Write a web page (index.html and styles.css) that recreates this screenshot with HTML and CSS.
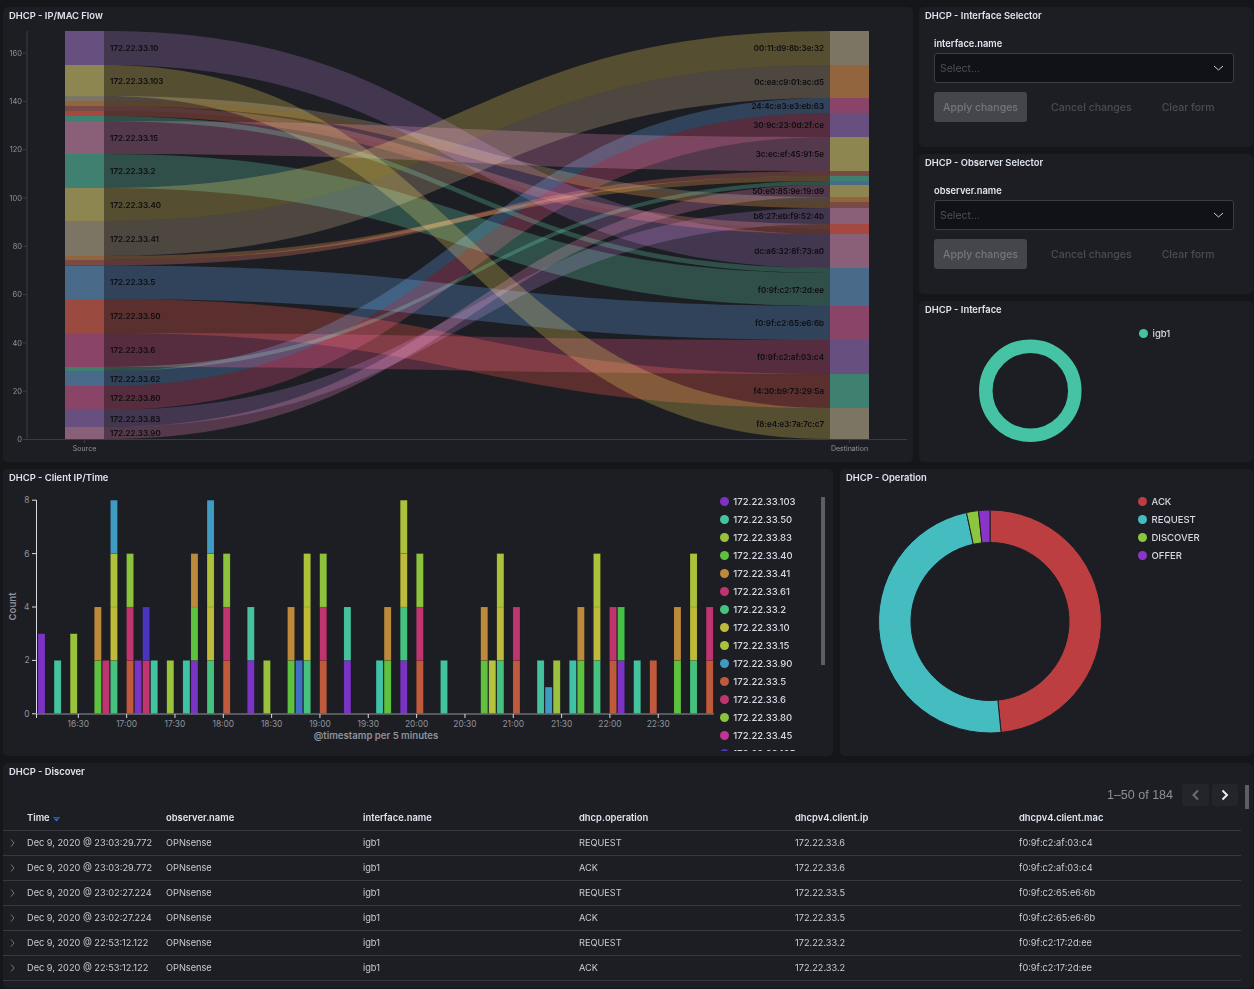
FILE: index.html
```html
<!DOCTYPE html>
<html lang="en">
<head>
    <meta charset="UTF-8">
    <title>DHCP</title>
    <link rel="stylesheet" href="styles.css">
</head>
<body>
<div class="row row-top">
    <div class="panel flow">
        <h2>DHCP - IP/MAC Flow</h2>
        <svg id="sankey" class="chart" width="910" height="440" viewBox="3 22 910 440"></svg>
    </div>
    <div class="side">
        <div class="panel selector">
            <h2>DHCP - Interface Selector</h2>
            <div class="form">
                <label>interface.name</label>
                <div class="select">
                    <span>Select...</span>
                    <svg width="11" height="6" viewBox="0 0 11 6"><polyline points="1,1 5.5,5 10,1"/></svg>
                </div>
                <div class="btns">
                    <button class="apply" disabled>Apply changes</button>
                    <button class="plain" disabled>Cancel changes</button>
                    <button class="plain" disabled>Clear form</button>
                </div>
            </div>
        </div>
        <div class="panel selector">
            <h2>DHCP - Observer Selector</h2>
            <div class="form">
                <label>observer.name</label>
                <div class="select">
                    <span>Select...</span>
                    <svg width="11" height="6" viewBox="0 0 11 6"><polyline points="1,1 5.5,5 10,1"/></svg>
                </div>
                <div class="btns">
                    <button class="apply" disabled>Apply changes</button>
                    <button class="plain" disabled>Cancel changes</button>
                    <button class="plain" disabled>Clear form</button>
                </div>
            </div>
        </div>
        <div class="panel iface">
            <h2>DHCP - Interface</h2>
            <div class="pie-body">
                <svg class="chart" width="220" height="146" viewBox="919 316 220 146">
                    <circle class="ring" cx="1030.3" cy="390.7" r="44.5"/>
                </svg>
                <ul class="legend">
                    <li><i class="c-teal"></i>igb1</li>
                </ul>
            </div>
        </div>
    </div>
</div>

<div class="row row-mid">
    <div class="panel client">
        <h2>DHCP - Client IP/Time</h2>
        <div class="client-body">
            <svg id="bars" class="chart" width="711" height="272" viewBox="3 484 711 272"></svg>
            <div class="legend-wrap">
                <ul class="legend">
                    <li><i class="c-103"></i>172.22.33.103</li>
                    <li><i class="c-50"></i>172.22.33.50</li>
                    <li><i class="c-83"></i>172.22.33.83</li>
                    <li><i class="c-40"></i>172.22.33.40</li>
                    <li><i class="c-41"></i>172.22.33.41</li>
                    <li><i class="c-6"></i>172.22.33.61</li>
                    <li><i class="c-2"></i>172.22.33.2</li>
                    <li><i class="c-10"></i>172.22.33.10</li>
                    <li><i class="c-15"></i>172.22.33.15</li>
                    <li><i class="c-90"></i>172.22.33.90</li>
                    <li><i class="c-5"></i>172.22.33.5</li>
                    <li><i class="c-6"></i>172.22.33.6</li>
                    <li><i class="c-80"></i>172.22.33.80</li>
                    <li><i class="c-45"></i>172.22.33.45</li>
                    <li><i class="c-105"></i>172.22.33.105</li>
                </ul>
                <div class="thumb"></div>
            </div>
        </div>
    </div>
    <div class="panel oper">
        <h2>DHCP - Operation</h2>
        <div class="pie-body">
            <svg id="oper" class="chart" width="298" height="272" viewBox="840 484 298 272"></svg>
            <ul class="legend">
                <li><i class="c-ack"></i>ACK</li>
                <li><i class="c-req"></i>REQUEST</li>
                <li><i class="c-disc"></i>DISCOVER</li>
                <li><i class="c-off"></i>OFFER</li>
            </ul>
        </div>
    </div>
</div>

<div class="panel discover">
    <h2>DHCP - Discover</h2>
    <div class="pager">
        <span>1–50 of 184</span>
        <a class="page-btn prev" href="javascript:;"><svg width="9" height="12" viewBox="0 0 9 12"><polyline class="off" points="7,1.5 2.5,6 7,10.5"/></svg></a>
        <a class="page-btn" href="javascript:;"><svg width="9" height="12" viewBox="0 0 9 12"><polyline points="1.5,1.5 6,6 1.5,10.5"/></svg></a>
    </div>
    <div class="thumb thumb-table"></div>
    <table>
        <colgroup>
            <col class="w-arrow"><col class="w-time"><col class="w-obs"><col class="w-if"><col class="w-op"><col class="w-ip"><col class="w-mac">
        </colgroup>
        <thead>
            <tr>
                <th></th>
                <th>Time <svg class="sort" width="7" height="5" viewBox="0 0 7 5"><path d="M0 0h7v.8H0zM.6 1.6h5.8L3.5 4.6z"/></svg></th>
                <th>observer.name</th>
                <th>interface.name</th>
                <th>dhcp.operation</th>
                <th>dhcpv4.client.ip</th>
                <th>dhcpv4.client.mac</th>
            </tr>
        </thead>
        <tbody>
            <tr><td><svg class="expand" width="5" height="8" viewBox="0 0 5 8"><polyline points="1,.5 4,4 1,7.5"/></svg></td><td>Dec 9, 2020 @ 23:03:29.772</td><td>OPNsense</td><td>igb1</td><td>REQUEST</td><td>172.22.33.6</td><td>f0:9f:c2:af:03:c4</td></tr>
            <tr><td><svg class="expand" width="5" height="8" viewBox="0 0 5 8"><polyline points="1,.5 4,4 1,7.5"/></svg></td><td>Dec 9, 2020 @ 23:03:29.772</td><td>OPNsense</td><td>igb1</td><td>ACK</td><td>172.22.33.6</td><td>f0:9f:c2:af:03:c4</td></tr>
            <tr><td><svg class="expand" width="5" height="8" viewBox="0 0 5 8"><polyline points="1,.5 4,4 1,7.5"/></svg></td><td>Dec 9, 2020 @ 23:02:27.224</td><td>OPNsense</td><td>igb1</td><td>REQUEST</td><td>172.22.33.5</td><td>f0:9f:c2:65:e6:6b</td></tr>
            <tr><td><svg class="expand" width="5" height="8" viewBox="0 0 5 8"><polyline points="1,.5 4,4 1,7.5"/></svg></td><td>Dec 9, 2020 @ 23:02:27.224</td><td>OPNsense</td><td>igb1</td><td>ACK</td><td>172.22.33.5</td><td>f0:9f:c2:65:e6:6b</td></tr>
            <tr><td><svg class="expand" width="5" height="8" viewBox="0 0 5 8"><polyline points="1,.5 4,4 1,7.5"/></svg></td><td>Dec 9, 2020 @ 22:53:12.122</td><td>OPNsense</td><td>igb1</td><td>REQUEST</td><td>172.22.33.2</td><td>f0:9f:c2:17:2d:ee</td></tr>
            <tr><td><svg class="expand" width="5" height="8" viewBox="0 0 5 8"><polyline points="1,.5 4,4 1,7.5"/></svg></td><td>Dec 9, 2020 @ 22:53:12.122</td><td>OPNsense</td><td>igb1</td><td>ACK</td><td>172.22.33.2</td><td>f0:9f:c2:17:2d:ee</td></tr>
        </tbody>
    </table>
</div>
<script src="script.js"></script>
</body>
</html>
```

FILE: styles.css
```css
*{margin:0;padding:0;box-sizing:border-box;}
ol,ul{list-style:none;}
a{text-decoration:none;}
html,body{height:989px;overflow:hidden;}
body{background:#15161a;font-family:Inter,"Liberation Sans",sans-serif;color:#d4dae5;padding:7px 1px 0 3px;display:flex;flex-direction:column;gap:7px;}

.row{display:flex;}
.row-top{gap:6px;height:455px;}
.row-mid{gap:7px;height:287px;}
.panel{background:#1d1e24;border-radius:5px;overflow:hidden;position:relative;}
.panel h2{height:15px;line-height:17px;padding-left:6px;font-size:9.4px;font-weight:600;color:#dfe5ef;}
.chart{display:block;}

.flow{width:910px;}
.side{width:334px;display:flex;flex-direction:column;gap:7px;}
.selector{height:140px;}
.iface{height:161px;}
.form{padding:16px 19px 0 15px;}
.form label{display:block;height:12px;line-height:12px;margin-bottom:3px;font-size:9.3px;font-weight:600;color:#dfe5ef;}
.select{height:30px;background:#111217;border:1px solid #3c3d43;border-radius:3px;display:flex;align-items:center;justify-content:space-between;padding:0 9px 0 5px;font-size:10.5px;color:#4c4f57;}
.select polyline{fill:none;stroke:#c9ccd2;stroke-width:1;}
.btns{display:flex;margin-top:9px;}
.btns button{height:30px;border:0;font-family:inherit;font-size:10.5px;font-weight:500;background:none;}
.apply{width:93px;background:#45464b !important;border-radius:3px;color:#75777c;}
.plain{padding:0 15px;color:#4b4d52;}
.apply + .plain{margin-left:9px;}

.pie-body{display:flex;}
.ring{fill:none;stroke:#46c3a4;stroke-width:13.5;}
.legend li{height:18px;display:flex;align-items:center;gap:4.5px;font-size:9.5px;font-weight:500;white-space:nowrap;}
.legend i{width:9px;height:9px;border-radius:50%;flex:none;}
.iface .legend{padding-top:8px;}
.oper .legend{padding-top:8.7px;}

.client{width:830px;}
.oper{width:413px;}
.client-body{display:flex;}
.legend-wrap{position:relative;flex:1;height:267px;overflow:hidden;padding:8.7px 0 0 5.8px;}
.thumb{position:absolute;width:4px;background:#5a5e66;top:13px;right:8px;height:168px;}
.thumb-table{top:22px;right:4px;height:24px;}

.c-teal{background:#46c3a4;}
.c-103{background:#7a33c4;}
.c-50{background:#45c29e;}
.c-83{background:#9bc23c;}
.c-40{background:#5ec23f;}
.c-41{background:#bd8a3c;}
.c-6{background:#c0356f;}
.c-2{background:#45c27e;}
.c-10{background:#bfbb3a;}
.c-15{background:#adc23a;}
.c-90{background:#3f9bc2;}
.c-5{background:#c05a3c;}
.c-80{background:#8cc23c;}
.c-45{background:#c0358f;}
.c-105{background:#4a35c2;}
.c-ack{background:#bc3e40;}
.c-req{background:#45bcc0;}
.c-disc{background:#8cc63f;}
.c-off{background:#8a35c8;}

.discover{height:225px;}
.pager{height:27px;padding:6px 15px 0 0;display:flex;justify-content:flex-end;gap:3px;font-family:"Liberation Sans",sans-serif;font-size:12.5px;color:#8d9097;}
.pager span{line-height:22px;margin-right:6px;}
.page-btn{width:26px;height:22px;background:#23252b;border-radius:3px;display:flex;align-items:center;justify-content:center;}
.page-btn.prev{width:27px;}
.page-btn polyline{fill:none;stroke:#eceef2;stroke-width:2;}
.page-btn polyline.off{stroke:#6b6e75;}

table{width:1238px;table-layout:fixed;border-collapse:collapse;font-size:9.2px;}
.w-arrow{width:24px;}
.w-time{width:139px;}
.w-obs{width:197px;}
.w-if{width:216px;}
.w-op{width:216px;}
.w-ip{width:224px;}
tr{height:25px;border-bottom:1px solid #38393f;}
th{text-align:left;font-weight:600;font-size:9.4px;color:#dfe5ef;}
td{color:#c9ccd2;}
td:first-child{padding-left:7px;}
.expand{display:block;}
.expand polyline{fill:none;stroke:#8a8d94;stroke-width:.8;}
.sort{margin-left:1px;vertical-align:-1px;}
.sort path{fill:#1f6fe5;}

#sankey text,#bars text{font-family:Inter,"Liberation Sans",sans-serif;}
.link{mix-blend-mode:screen;}
.node-label{font-size:8px;font-weight:600;fill:#0d0d10;}
.tick{font-size:7.5px;fill:#8f939b;}
.tick-end{font-size:7px;fill:#8f939b;}
.tick-x{font-size:8.4px;fill:#8f939b;}
.axis-title{font-size:9.6px;font-weight:600;fill:#8f939b;}
.line{stroke:#3a3c42;stroke-width:1;}
.bar{stroke:#000;stroke-opacity:.18;stroke-width:.5;}
.axis-main{stroke:#6b6e75;stroke-width:1.5;}
.axis-white{stroke:#d8dae0;stroke-width:1;}
.axis-grey{stroke:#3f4147;stroke-width:1;}
.slice{stroke:#1d1e24;stroke-width:1;}
```

FILE: script.js
```js
var NS_BG='#1d1e24';

function buildSankey(){
    var svg=document.getElementById('sankey');
    var c={pur:'#674f80',yel:'#8d8650',gry:'#7d7563',ora:'#93653f',mag:'#8a4468',mau:'#8a6078',grn:'#3f8070',blu:'#4a6a8a',red:'#9a4a3f',bro:'#7a4a45',dre:'#a5483f'};
    // ribbons are screened over the panel, so they get their own darker colours
    var lc={};
    lc[c.pur]='#2b1b32';lc[c.yel]='#3f360e';lc[c.gry]='#372e21';lc[c.mag]='#3f111e';lc[c.mau]='#3d1f2d';lc[c.grn]='#14382a';
    lc[c.blu]='#162a3f';lc[c.red]='#45130c';lc[c.ora]='#452a0c';lc[c.bro]='#451f17';lc[c.dre]='#45170c';
    // y0,y1,colour,label
    var left=[
        [31,65,c.pur,'172.22.33.10'],[65,96,c.yel,'172.22.33.103'],[96,101,c.gry],[101,106,c.ora],[106,111,c.bro],[111,116,c.dre],[116,121,c.grn],
        [121,154,c.mau,'172.22.33.15'],[154,188,c.grn,'172.22.33.2'],[188,221,c.yel,'172.22.33.40'],[221,256,c.gry,'172.22.33.41'],[256,260,c.ora],[260,265.5,c.bro],
        [265.5,299,c.blu,'172.22.33.5'],[299,333,c.red,'172.22.33.50'],[333,367,c.mag,'172.22.33.6'],[367,371,c.grn],[371,386,c.blu,'172.22.33.62'],
        [386,410,c.mag,'172.22.33.80'],[410,427,c.pur,'172.22.33.83'],[427,439,c.mau,'172.22.33.90']
    ];
    var right=[
        [31,65,c.gry,'00:11:d9:8b:3e:32'],[65,98,c.ora,'0c:ea:c9:01:ac:d5'],[98,113,c.mag,'24:4c:e3:e3:eb:63'],[113,137,c.pur,'30:9c:23:0d:2f:ce'],
        [137,171,c.yel,'3c:ec:ef:45:91:5e'],[171,176,c.bro],[176,181,c.grn],[181,185,c.blu],[185,197,c.yel,'50:e0:85:9e:19:d9'],[197,202,c.ora],[202,208,c.bro],
        [208,224,c.mau,'b8:27:eb:f9:52:4b'],[224,234,c.dre],[234,268,c.mau,'dc:a6:32:8f:73:a0'],[268,273,c.blu],[273,306,c.blu,'f0:9f:c2:17:2d:ee'],
        [306,340,c.mag,'f0:9f:c2:65:e6:6b'],[340,374,c.pur,'f0:9f:c2:af:03:c4'],[374,408,c.grn,'f4:30:b9:73:29:5a'],[408,439,c.gry,'f8:e4:e3:7a:7c:c7']
    ];
    // source index -> [destination y0,y1]
    var links=[
        [0,234,268],[1,408,439],[2,197,202],[3,202,208],[4,224,229],[5,229,234],[6,268,273],[7,137,171],[8,273,306],[9,31,65],[10,65,98],
        [11,176,181],[12,171,176],[13,306,340],[14,374,408],[15,340,374],[16,181,185],[17,98,113],[18,113,137],[19,208,224],[20,185,197]
    ];
    var h='<rect x="3" y="22" width="910" height="440" fill="'+NS_BG+'"/>';
    var i;

    //---axes------------------------------
    h+='<line class="line" x1="27" y1="31" x2="27" y2="439.5"/><line class="line" x1="23" y1="439.5" x2="907" y2="439.5"/>';
    for(i=0;i<=8;i++){
        var ty=439.5-i*48.3;
        h+='<line class="line" x1="23" y1="'+ty+'" x2="27" y2="'+ty+'"/>';
        h+='<text class="tick" x="22" y="'+(ty+2.6)+'" text-anchor="end">'+(i*20)+'</text>';
    }
    h+='<line class="line" x1="84.5" y1="439.5" x2="84.5" y2="443"/><line class="line" x1="849.5" y1="439.5" x2="849.5" y2="443"/>';
    h+='<text class="tick-end" x="84.5" y="451" text-anchor="middle">Source</text>';
    h+='<text class="tick-end" x="849.5" y="451" text-anchor="middle">Destination</text>';

    //---ribbons---------------------------
    var x0=104,x1=830,m=467;
    for(i=0;i<links.length;i++){
        var s=left[links[i][0]],d0=links[i][1],d1=links[i][2];
        h+='<path class="link" fill="'+lc[s[2]]+'" d="M'+x0+' '+s[0]+'C'+m+' '+s[0]+' '+m+' '+d0+' '+x1+' '+d0+'L'+x1+' '+d1+'C'+m+' '+d1+' '+m+' '+s[1]+' '+x0+' '+s[1]+'Z"/>';
    }

    //---nodes-----------------------------
    function nodes(list,x,lx,anchor){
        for(var j=0;j<list.length;j++){
            var n=list[j];
            h+='<rect x="'+x+'" y="'+n[0]+'" width="39" height="'+(n[1]-n[0])+'" fill="'+n[2]+'"/>';
            if(n[3]) h+='<text class="node-label" x="'+lx+'" y="'+((n[0]+n[1])/2+3)+'" text-anchor="'+anchor+'">'+n[3]+'</text>';
        }
    }
    nodes(left,65,110,'start');
    nodes(right,830,824,'end');
    svg.innerHTML=h;
}

function buildBars(){
    var svg=document.getElementById('bars');
    var P='#7a33c4',T='#45c29e',L='#9bc23c',G='#5ec23f',O='#bd8a3c',M='#c0356f',E='#45c27e',Y='#bfbb3a',S='#adc23a',B='#3f9bc2',R='#c05a3c',N='#8cc23c',I='#4a35c2',C='#40c2a8',K='#3f6fc2',W='#b5c23c',V='#45c245';
    var A=[[E,2],[Y,2],[S,2]];
    var data=[
        [0,[[P,3]]],[2,[[T,2]]],[4,[[L,3]]],[7,[[G,2],[O,2]]],[8,[[M,2]]],[9,[[E,2],[Y,2],[S,2],[B,2]]],[11,[[R,2],[M,2],[N,2]]],[12,[[P,2]]],
        [13,[[M,2],[I,2]]],[14,[[T,2]]],[16,[[L,2]]],[18,[[C,2]]],[19,[[P,2],[G,2],[O,2]]],[21,[[E,2],[Y,2],[S,2],[B,2]]],[23,[[R,2],[M,2],[N,2]]],
        [26,[[P,2],[T,2]]],[28,[[L,2]]],[31,[[G,2],[O,2]]],[32,[[K,2]]],[33,A],[35,[[R,2],[M,2],[N,2]]],[38,[[P,2],[T,2]]],[42,[[C,2]]],[43,[[G,2],[O,2]]],
        [45,[[P,2],[E,2],[Y,2],[S,2]]],[47,[[R,2],[M,2],[N,2]]],[50,[[T,2]]],[55,[[G,2],[O,2]]],[56,[[W,2]]],[57,A],[59,[[R,2],[M,2]]],[62,[[T,2]]],
        [63,[[B,1]]],[64,[[L,2]]],[66,[[C,2]]],[67,[[G,2],[O,2]]],[69,A],[71,[[R,2],[M,2]]],[72,[[P,2],[V,2]]],[74,[[T,2]]],[76,[[R,2]]],[79,[[G,2],[O,2]]],
        [81,A],[83,[[R,2],[M,2]]]
    ];
    var base=713.8,unit=26.7;
    var h='<rect x="3" y="484" width="711" height="272" fill="'+NS_BG+'"/>';
    var i,j;
    for(i=0;i<data.length;i++){
        var x=38+8.05*data[i][0],bot=base;
        for(j=0;j<data[i][1].length;j++){
            var seg=data[i][1][j],bh=seg[1]*unit;
            h+='<rect class="bar" x="'+x+'" y="'+(bot-bh)+'" width="7" height="'+bh+'" fill="'+seg[0]+'"/>';
            bot-=bh;
        }
    }
    h+='<line class="axis-white" x1="36.5" y1="500" x2="36.5" y2="714"/>';
    h+='<line class="axis-main" x1="36" y1="714" x2="714" y2="714"/>';
    h+='<line class="axis-grey" x1="714.5" y1="500" x2="714.5" y2="718"/>';
    h+='<line class="axis-white" x1="36.5" y1="714" x2="36.5" y2="718"/>';
    for(i=0;i<=4;i++){
        var ty=713.8-i*53.4;
        h+='<line class="axis-white" x1="32" y1="'+ty+'" x2="36.5" y2="'+ty+'"/>';
        h+='<text class="tick-x" x="29.5" y="'+(ty+3)+'" text-anchor="end">'+(i*2)+'</text>';
    }
    var hr=16,mn=30;
    for(i=0;i<=12;i++){
        var tx=78.3+48.33*i;
        h+='<line class="axis-white" x1="'+tx+'" y1="714" x2="'+tx+'" y2="718"/>';
        h+='<text class="tick-x" x="'+tx+'" y="727" text-anchor="middle">'+hr+':'+(mn?'30':'00')+'</text>';
        if(mn) hr++;
        mn=mn?0:30;
    }
    h+='<text class="axis-title" x="376" y="739" text-anchor="middle">@timestamp per 5 minutes</text>';
    h+='<text class="axis-title" x="0" y="0" text-anchor="middle" transform="translate(15.5 606.5) rotate(-90)">Count</text>';
    svg.innerHTML=h;
}

function buildOper(){
    var svg=document.getElementById('oper');
    var cx=990,cy=621.5,R=111.5,r=79;
    var parts=[[0,174.3,'#bc3e40'],[174.3,347.8,'#45bcc0'],[347.8,354.1,'#8cc63f'],[354.1,360,'#8a35c8']];
    function pt(a,rad){
        var t=a*Math.PI/180;
        return (cx+rad*Math.sin(t)).toFixed(2)+' '+(cy-rad*Math.cos(t)).toFixed(2);
    }
    var h='';
    for(var i=0;i<parts.length;i++){
        var p=parts[i],big=(p[1]-p[0]>180)?1:0;
        h+='<path class="slice" fill="'+p[2]+'" d="M'+pt(p[0],R)+'A'+R+' '+R+' 0 '+big+' 1 '+pt(p[1],R)+'L'+pt(p[1],r)+'A'+r+' '+r+' 0 '+big+' 0 '+pt(p[0],r)+'Z"/>';
    }
    svg.innerHTML=h;
}

buildSankey();
buildBars();
buildOper();
```
